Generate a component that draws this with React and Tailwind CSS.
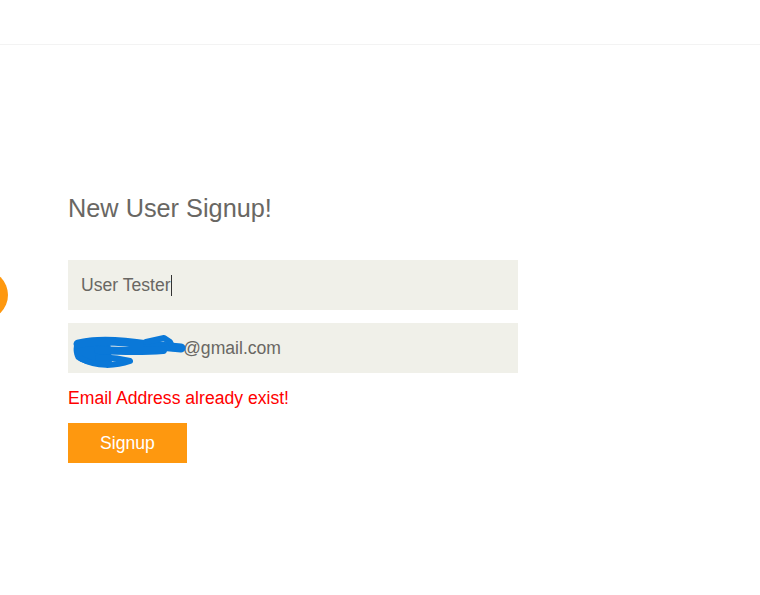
export default function App() {
  return (
    <div className="relative min-h-[595px] w-full overflow-hidden bg-white font-['Liberation_Sans',Arial,sans-serif] text-[#696763]">
      <header className="h-[45px] border-b border-[#f3f3f3] bg-white" />

      <div className="absolute left-[-42px] top-[270px] h-[50px] w-[50px] rounded-full bg-[#fe980f]" />

      <main className="pl-[68px]">
        <h2 className="mt-[151px] text-[25.3px] leading-[25px] font-normal">New User Signup!</h2>

        <div className="mt-[39px] flex h-[50px] w-[450px] items-center bg-[#f0f0e9] pl-[13px] text-[17.6px]">
          <span>User Tester</span>
          <span className="ml-[0.5px] h-[21px] w-px bg-[#333]" />
        </div>

        <div className="relative mt-[13px] flex h-[50px] w-[450px] items-center bg-[#f0f0e9] pl-[13px] text-[17.6px]">
          <span className="inline-block w-[102px]" />
          <span>@gmail.com</span>
          <svg className="absolute left-0 top-0" width="130" height="50" viewBox="0 0 130 50">
            <path
              d="M7 20 C15 14, 30 14, 42 16 L44 40 C30 44, 15 42, 8 36 C5 30, 5 24, 7 20 Z"
              fill="#0a78d8"
            />
            <g fill="none" stroke="#0a78d8" strokeLinecap="round" strokeLinejoin="round">
              <path d="M10 21 C30 16, 55 18, 80 22 L113 25" strokeWidth="9" />
              <path d="M30 27 C50 28, 70 29, 95 27" strokeWidth="8" />
              <path d="M14 36 C28 44, 48 43, 62 38 C50 35, 40 34, 30 35" strokeWidth="6" />
              <path d="M78 19 L96 15 L102 19 L105 25" strokeWidth="6" />
            </g>
          </svg>
        </div>

        <p className="mt-[15px] text-[17.6px] leading-[20px] text-[#ff0000]">Email Address already exist!</p>

        <button className="mt-[15px] flex h-[40px] w-[119px] items-center justify-center bg-[#fe980f] text-[17.6px] text-white">
          Signup
        </button>
      </main>
    </div>
  );
}
